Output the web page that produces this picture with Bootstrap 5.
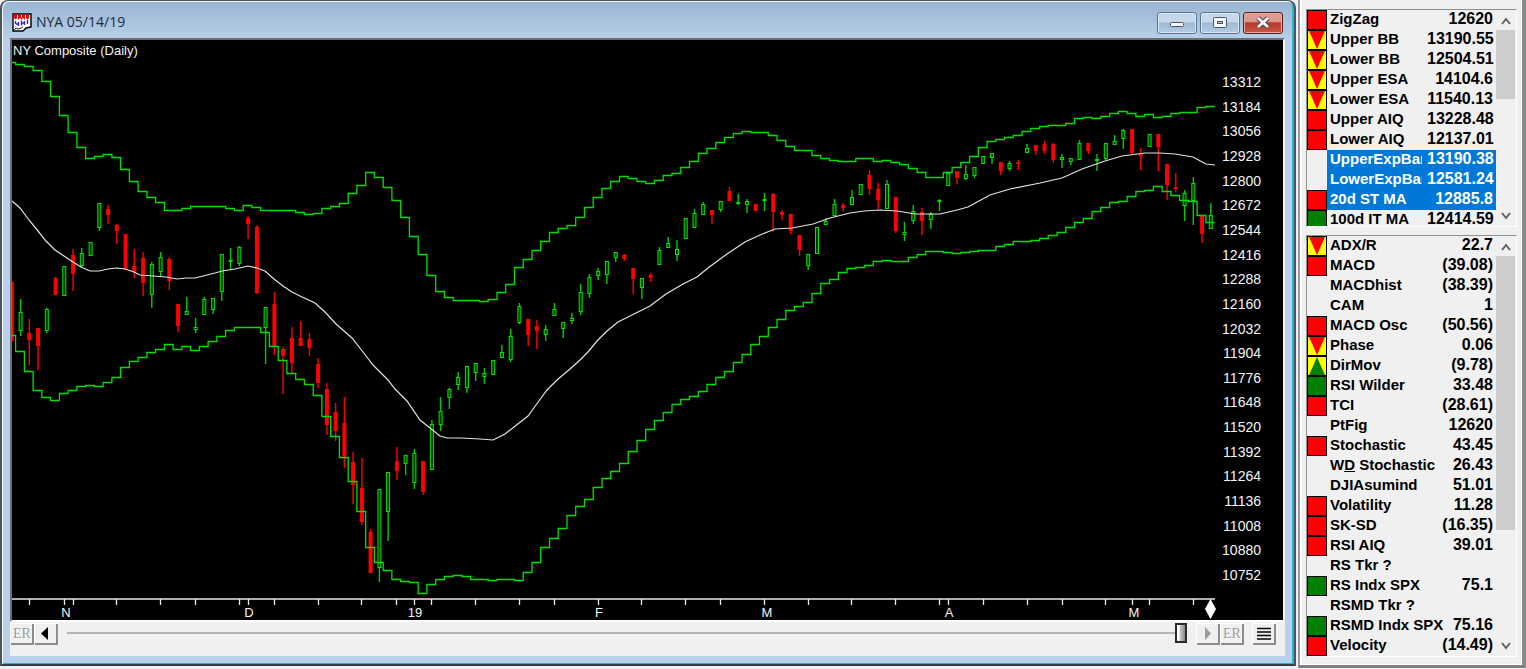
<!DOCTYPE html>
<html lang="en">
<head>
<meta charset="utf-8">
<meta name="viewport" content="width=device-width, initial-scale=1">
<title>NYA 05/14/19</title>
<link href="https://cdn.jsdelivr.net/npm/bootstrap@5.3.0/dist/css/bootstrap.min.css" rel="stylesheet">
<style>
  body { background: #f0f0f0; font-family: "Liberation Sans", Arial, sans-serif; color: #000; }
  button { font-family: inherit; }

  .mdi-window {
    min-width: 0;
    background: linear-gradient(#99b4d1, #b9d1ea 40px);
    border: 2px solid #4a5560;
    border-top-width: 1px;
    border-bottom-color: #353c44;
    border-radius: 8px 8px 0 0;
    box-shadow: inset 1px 1px 0 #f4f8fc, inset -1px -1px 0 #25b3cf, inset -2px -1px 0 #25b3cf;
    padding: 0 9px 8px 8px;
  }
  .title-bar { height: 37px; padding: 7px 2px 0 2px; }
  .title-text { font: 14px/20px "Open Sans", sans-serif; color: #1e2a3a; }
  .caption-btn {
    display: flex; align-items: center; justify-content: center;
    width: 40px; height: 22px; padding: 0;
    border: 1px solid #5d7590; border-radius: 3px;
    background: linear-gradient(#c6d8ea 0 45%, #9fb9d4 50%, #b4cce4);
    box-shadow: inset 0 0 0 1px #dbe8f4;
  }
  .caption-close {
    border-color: #5b1f22;
    background: linear-gradient(#dd9a90 0 42%, #b5382a 50%, #c75a48);
    box-shadow: inset 0 0 0 1px #e5aaa2;
  }
  .chart-frame { border: 2px solid #6f6f6f; border-right-color: #f4f4f4; border-bottom-color: #fff; background: #000; }
  .chart-frame svg { display: block; width: 100%; height: auto; }
  .chart-text { font: 13px "Liberation Sans", Arial, sans-serif; fill: #f4f4f4; }
  .price-label { font-size: 14px; }
  .up-body { fill: #003c00; stroke: #00e400; stroke-width: 1; }
  .up-wick { fill: #00cc00; }
  .down { fill: #ff0000; }
  .band { fill: none; stroke: #00e000; stroke-width: 1.3; }
  .average { fill: none; stroke: #e2e2e2; stroke-width: 1.2; }

  .tool-bar { background: #f0f0f0; height: 34px; padding: 1px 9px 10px 0; }
  .tool-btn {
    width: 24px; height: 22px; padding: 0; border: 0; border-radius: 0; background: #f0f0f0;
    box-shadow: inset 1px 1px 0 #fff, inset -2px -2px 0 #8c8c8c;
    font: 14px/20px "Liberation Serif", serif; color: #000;
  }
  .tool-btn svg { display: block; }
  .tool-btn:disabled { color: #9c9c9c; text-shadow: 1px 1px 0 #fff; }
  .position-slider { appearance: none; -webkit-appearance: none; background: none; height: 20px; min-width: 0; margin: 0 9px; }
  .position-slider::-webkit-slider-runnable-track { height: 20px; background: linear-gradient(#b4b4b4, #b4b4b4) center / 100% 2px no-repeat; }
  .position-slider::-webkit-slider-thumb {
    -webkit-appearance: none; width: 12px; height: 20px; border: 2px solid #2b2b2b;
    background: linear-gradient(90deg, #fff 2px, #c8c8c8 3px, #8a8a8a);
  }

  .indicator-panel {
    width: 228px; margin-left: 2px; padding: 9px 5px 8px 6px; background: #f0f0f0;
    border-left: 2px solid #9a9a9a; border-right: 4px solid #8a8a8a; border-bottom: 3px solid #7f7f7f;
    box-shadow: inset 2px 0 0 #fff, inset -1px -1px 0 #fff;
  }
  .list-box { border: 1px solid #8f8f8f; border-right-color: #fff; border-bottom-color: #fff; overflow: hidden; }
  .list-short { height: 218px; }
  .indicators { width: 189px; table-layout: fixed; border-collapse: collapse; }
  .indicators td { height: 20px; padding: 0; font-weight: bold; line-height: 18px; vertical-align: top; white-space: nowrap; }
  .indicators .col-flag { width: 20px; }
  .indicators .col-reading { width: 69px; }
  .indicators .item-name { font-size: 15px; padding-left: 3px; }
  .list-short .name-clip { width: 92px; overflow: hidden; }
  .indicators .item-reading { font-size: 16px; text-align: right; padding-right: 3px; }
  .indicators .picked .item-name, .indicators .picked .item-reading { background: #0078d7; color: #fff; }
  .flag { display: block; width: 20px; height: 20px; border: 1px solid #000; }
  .flag-red { background: #f00; }
  .flag-green { background: #008000; }
  .flag-fall, .flag-rise { background: #ff0; }
  .flag-fall::after, .flag-rise::after { content: ""; display: block; height: 18px; }
  .flag-fall::after { background: #f00; clip-path: polygon(6% 0, 94% 0, 50% 100%); }
  .flag-rise::after { background: #008000; clip-path: polygon(50% 0, 94% 100%, 6% 100%); }
  .scroll-rail { width: 20px; }
  .scroll-rail button { height: 20px; width: 20px; padding: 0; border: 0; background: none; line-height: 0; }
  .scroll-thumb { background: #cdcdcd; width: 19px; height: 69px; }
  .scroll-thumb-long { height: 274px; }
</style>
</head>
<body class="d-flex align-items-start">

<main class="mdi-window flex-grow-1">
  <header class="title-bar d-flex align-items-start">
    <svg class="mt-1" width="20" height="20" viewBox="0 0 20 20" aria-hidden="true">
      <path d="M1 2h18v13l-5 1-3 3H1z" fill="#fff" stroke="#000" stroke-width="1.4"/>
      <path d="M2 4.500h16" stroke="#e00" stroke-width="4" stroke-dasharray="3 1"/>
      <path d="M3 6.500h14" stroke="#e00" stroke-width="2" stroke-dasharray="1 2"/>
      <path d="M3.500 9v3M6.500 10v4M9.500 8.500v5M12.500 9v4M15.500 8v4M4 12h2M10 11h2" stroke="#2323e0" stroke-width="1.300" fill="none"/>
      <path d="M2 18l2-2 2 1 3-1 2-1" stroke="#222" fill="none"/>
    </svg>
    <span class="title-text ms-1 mt-1 flex-grow-1">NYA 05/14/19</span>
    <div class="d-flex mt-1" style="gap:3px">
      <button type="button" class="caption-btn" aria-label="Minimize">
        <svg width="16" height="14" viewBox="0 0 16 14"><rect x="1.500" y="6.500" width="13" height="4" rx="1" fill="#f8f8f8" stroke="#46566a"/></svg>
      </button>
      <button type="button" class="caption-btn" aria-label="Maximize">
        <svg width="16" height="14" viewBox="0 0 16 14"><rect x="1.500" y="1.500" width="13" height="10" rx="1" fill="#f8f8f8" stroke="#46566a"/><rect x="5.500" y="5.500" width="5" height="2" fill="#a8bfd8" stroke="#46566a"/></svg>
      </button>
      <button type="button" class="caption-btn caption-close" aria-label="Close">
        <svg width="16" height="14" viewBox="0 0 16 14"><path d="M3 2l10 9M13 2l-10 9" stroke="#54404a" stroke-width="5"/><path d="M3 2l10 9M13 2l-10 9" stroke="#f8f8f8" stroke-width="3"/></svg>
      </button>
    </div>
  </header>

  <section class="chart-frame">
    <svg id="chart" viewBox="12 40 1271 580" role="img" aria-label="NY Composite daily price chart"></svg>
  </section>

  <div class="tool-bar d-flex align-items-start">
    <button type="button" class="tool-btn" disabled>ER</button>
    <button type="button" class="tool-btn" aria-label="Step back">
      <svg width="24" height="22" viewBox="0 0 24 22"><path d="M14 4v13l-7-6.500z" fill="#000"/></svg>
    </button>
    <input type="range" class="position-slider flex-grow-1" min="0" max="137" value="137" aria-label="Chart date">
    <button type="button" class="tool-btn" disabled aria-label="Step forward">
      <svg width="24" height="22" viewBox="0 0 24 22"><path d="M9 4v13l6-6.500z" fill="#9c9c9c"/></svg>
    </button>
    <button type="button" class="tool-btn" disabled>ER</button>
    <button type="button" class="tool-btn ms-2" aria-label="Menu">
      <svg width="24" height="22" viewBox="0 0 24 22"><path d="M5 5.500h14M5 9h14M5 12.500h14M5 16h14" stroke="#000" stroke-width="1.500"/></svg>
    </button>
  </div>
</main>

<aside class="indicator-panel flex-shrink-0 d-flex flex-column gap-2">
  <section class="list-box list-short d-flex">
    <table class="indicators" id="overlays"></table>
    <div class="scroll-rail d-flex flex-column">
      <button type="button" aria-label="Scroll up"><svg width="20" height="20" viewBox="0 0 20 20"><path d="M6 14l4-5 4 5" fill="none" stroke="#606060" stroke-width="2"/></svg></button>
      <div class="scroll-thumb"></div>
      <button type="button" class="mt-auto" aria-label="Scroll down"><svg width="20" height="20" viewBox="0 0 20 20"><path d="M6 7l4 5 4-5" fill="none" stroke="#606060" stroke-width="2"/></svg></button>
    </div>
  </section>
  <section class="list-box d-flex">
    <table class="indicators" id="oscillators"></table>
    <div class="scroll-rail d-flex flex-column">
      <button type="button" aria-label="Scroll up"><svg width="20" height="20" viewBox="0 0 20 20"><path d="M6 14l4-5 4 5" fill="none" stroke="#606060" stroke-width="2"/></svg></button>
      <div class="scroll-thumb scroll-thumb-long"></div>
      <button type="button" class="mt-auto" aria-label="Scroll down"><svg width="20" height="20" viewBox="0 0 20 20"><path d="M6 7l4 5 4-5" fill="none" stroke="#606060" stroke-width="2"/></svg></button>
    </div>
  </section>
</aside>

<script src="https://cdn.jsdelivr.net/npm/bootstrap@5.3.0/dist/js/bootstrap.bundle.min.js"></script>
<script>
  // Indicator lists: flag, name, value, selected
  const overlays = [
    ['red', 'ZigZag', '12620'], ['fall', 'Upper BB', '13190.55'], ['fall', 'Lower BB', '12504.51'],
    ['fall', 'Upper ESA', '14104.6'], ['fall', 'Lower ESA', '11540.13'], ['red', 'Upper AIQ', '13228.48'],
    ['red', 'Lower AIQ', '12137.01'], ['', 'UpperExpBan', '13190.38', true], ['', 'LowerExpBan', '12581.24', true],
    ['red', '20d ST MA', '12885.8', true], ['green', '100d IT MA', '12414.59']
  ];
  const oscillators = [
    ['fall', 'ADX/R', '22.7'], ['red', 'MACD', '(39.08)'], ['', 'MACDhist', '(38.39)'], ['', 'CAM', '1'],
    ['red', 'MACD Osc', '(50.56)'], ['fall', 'Phase', '0.06'], ['rise', 'DirMov', '(9.78)'],
    ['green', 'RSI Wilder', '33.48'], ['red', 'TCI', '(28.61)'], ['', 'PtFig', '12620'],
    ['red', 'Stochastic', '43.45'], ['', 'W<u>D</u> Stochastic', '26.43'], ['', 'DJIAsumind', '51.01'],
    ['red', 'Volatility', '11.28'], ['red', 'SK-SD', '(16.35)'], ['red', 'RSI AIQ', '39.01'],
    ['', 'RS Tkr ?', ''], ['green', 'RS Indx SPX', '75.1'], ['', 'RSMD Tkr ?', ''],
    ['green', 'RSMD Indx SPX', '75.16'], ['red', 'Velocity', '(14.49)']
  ];
  function fillTable(id, rows) {
    document.getElementById(id).innerHTML =
      '<colgroup><col class="col-flag"><col><col class="col-reading"></colgroup><tbody>' +
      rows.map(([flag, name, value, picked]) =>
        `<tr${picked ? ' class="picked"' : ''}><td>${flag ? `<span class="flag flag-${flag}"></span>` : ''}</td>` +
        `<td class="item-name"><div class="name-clip">${name}</div></td><td class="item-reading">${value}</td></tr>`).join('') + '</tbody>';
  }
  fillTable('overlays', overlays);
  fillTable('oscillators', oscillators);

  // Daily bars: direction, high, body top, body bottom, low
  const bars = `r 281 282 340 341|g 299 312 330 335|r 319 333 339 364|r 328 328 345 369|g 308 309 330 332|r 277 278 294 294|g 266 266 295 295|r 249 255 273 290|g 248 253 265 266|g 242 242 255 255|g 203 203 227 230|r 205 209 214 223|r 224 225 230 243|r 234 234 268 269|r 249 266 271 277|r 252 258 282 295|g 262 264 294 307|g 252 257 271 276|r 257 259 280 289|r 304 304 325 331|g 297 311 314 314|g 318 327 329 332|g 297 299 314 314|g 298 298 309 313|g 254 254 291 300|g 248 260 261 269|g 246 247 263 265|r 216 218 223 238|r 225 227 292 293|g 307 307 327 363|r 292 304 345 354|r 347 349 355 393|r 327 338 362 372|r 321 338 345 345|r 333 339 347 355|r 358 364 382 387|r 383 389 424 434|r 403 412 430 440|r 397 423 455 467|r 452 462 484 503|r 458 488 521 524|r 529 532 572 572|g 489 489 567 581|g 472 472 511 540|r 447 461 470 479|g 455 455 463 474|g 449 453 482 488|r 461 461 491 494|g 420 424 469 469|g 397 411 424 430|g 388 389 397 408|g 372 377 384 389|g 366 366 387 392|g 363 363 372 380|g 368 373 376 383|g 360 360 374 374|g 345 352 357 357|g 329 336 359 361|g 303 306 322 323|r 319 319 334 345|r 320 326 330 348|g 325 329 334 340|g 303 309 315 315|g 322 322 328 337|g 313 318 320 323|g 284 292 311 314|g 274 277 293 297|g 268 271 275 279|g 261 261 274 283|g 252 252 257 261|r 254 255 258 260|r 268 268 278 293|g 278 278 287 298|r 273 275 277 281|g 247 250 264 264|g 237 243 247 247|g 240 249 254 260|g 218 218 238 238|g 209 213 227 227|g 202 204 214 214|r 210 210 214 223|g 201 201 209 211|r 187 191 200 200|g 194 202 203 204|g 199 201 204 212|r 204 204 210 210|g 193 199 200 210|r 193 194 211 231|r 210 212 214 219|r 214 214 230 233|r 235 235 249 255|g 254 254 265 269|g 227 227 253 253|g 218 221 224 224|g 199 204 215 215|r 203 205 207 211|g 190 197 204 204|g 184 184 194 194|r 170 175 188 194|r 183 189 199 208|g 180 184 208 208|r 197 197 230 232|g 222 232 234 240|g 205 211 220 223|r 208 212 220 234|g 212 214 219 228|g 199 200 201 210|g 173 173 185 185|r 171 171 177 183|g 165 174 178 179|g 167 167 175 177|g 156 156 163 163|g 153 153 157 163|r 162 162 170 174|g 161 163 168 170|r 160 162 163 169|g 144 148 152 152|r 145 145 150 154|r 141 144 150 153|r 143 144 159 162|g 154 157 159 167|g 158 158 161 164|g 140 143 159 159|r 143 143 150 153|g 154 159 160 170|g 143 143 158 159|g 135 141 144 144|g 129 130 138 148|r 129 129 152 153|r 148 153 155 169|g 134 134 146 146|r 134 134 146 170|r 164 164 184 199|r 173 187 188 191|g 190 193 205 220|g 177 183 200 224|r 215 215 233 242|g 203 215 228 228`
    .split('|').map(b => b.split(' '));

  const upper = [62,64,66,70,81,96,115,132,147,158,156,154,157,169,181,191,197,202,210,210,208,206,206,206,206,208,210,205,207,210,210,210,210,212,214,213,208,206,203,193,185,172,177,187,200,217,236,254,275,291,297,300,300,300,301,299,292,284,267,259,250,241,232,228,225,217,207,197,188,181,176,178,181,183,180,175,173,167,161,153,148,142,137,133,131,132,132,135,140,146,150,150,155,158,160,161,161,158,158,161,160,162,164,168,172,177,177,172,167,162,156,147,141,139,137,135,131,128,126,125,125,123,118,117,118,116,113,111,113,116,114,117,116,113,112,112,107,106];
  const lower = [335,351,371,390,397,400,393,390,386,385,386,382,377,367,361,357,352,349,344,349,346,350,346,341,336,330,327,327,327,332,346,360,373,379,384,395,416,436,457,481,511,547,562,570,579,581,582,593,584,579,576,575,576,579,579,580,579,579,580,572,562,547,538,528,515,506,499,487,478,471,463,451,440,429,420,412,404,399,396,391,384,377,371,362,354,344,336,327,319,310,306,302,293,283,279,272,268,267,265,261,260,261,261,257,254,251,251,252,253,252,251,250,250,246,244,241,241,240,238,235,232,227,222,218,211,207,202,201,196,191,190,186,191,195,200,201,215,222];
  const average = '12,201 20,208 29,220 38,231 46,241 55,250 64,256 73,262 81,267 90,271 99,271 108,269 117,268 125,269 134,272 140,275 166,277 177,279 186,278 195,278 203,276 215,273 222,271 235,269 248,266 257,268 265,271 274,279 283,286 292,292 300,296 315,303 325,312 336,324 352,338 363,352 373,365 388,380 395,389 407,401 420,420 430,428 440,436 447,438 461,438 480,439 493,440 505,434 514,427 528,416 536,405 547,390 557,380 570,369 580,360 588,352 597,341 607,331 618,322 628,317 650,306 666,294 683,284 697,277 708,268 727,254 745,242 760,235 775,229 792,228 813,224 830,218 850,213 864,211 880,210 897,211 915,214 940,214 957,210 968,207 990,195 1010,189 1040,183 1062,178 1082,169 1105,161 1122,156 1145,153 1160,153 1175,154 1193,157 1206,164 1215,165';

  const step = 8.752, left = 11.3;
  const at = i => left + step * i;
  const fix = n => n.toFixed(1);
  const stairs = levels => 'M12 ' + (levels[0] + .5) +
    levels.map((y, i) => `V${y + .5}H${fix(at(i) + 4.3)}`).join('');

  let out = '';
  bars.forEach(([dir, high, top, bottom, low], i) => {
    const x = at(i) + .5, h = +high, t = +top, b = +bottom, l = +low;
    if (dir === 'r') {
      out += `<rect class="down" x="${fix(x - .7)}" y="${h}" width="1.4" height="${l - h + 1}"/>` +
             `<rect class="down" x="${fix(x - 2)}" y="${t}" width="4" height="${b - t + 1}"/>`;
    } else {
      out += `<rect class="up-wick" x="${fix(x - .7)}" y="${h}" width="1.4" height="${l - h + 1}"/>` +
             `<rect class="up-body" x="${fix(x - 1.5)}" y="${t + .5}" width="3" height="${b - t}"/>`;
    }
  });
  out += `<path class="band" d="${stairs(upper)}"/><path class="band" d="${stairs(lower)}"/>`;
  out += `<polyline class="average" points="${average}"/>`;

  // Time axis: a tick on each week's last session and on each month's first
  const ticks = [2,6,7,12,17,21,26,27,30,35,40,44,46,48,53,58,62,67,72,77,81,86,91,96,101,106,107,111,116,120,125,128,130,135];
  out += '<path d="M12 599H1215' + ticks.map(i => `M${Math.round(at(i)) + .5} 599v6`).join('') + '" stroke="#e8e8e8" stroke-width="1.3"/>';
  out += '<path d="M1210.500 599l5.500 10-5.500 10-5.500-10z" fill="#fff"/>';
  [['N', 66], ['D', 249], ['19', 415], ['F', 599], ['M', 767], ['A', 949], ['M', 1134]].forEach(([label, x]) => {
    out += `<text class="chart-text" x="${x}" y="617" text-anchor="middle">${label}</text>`;
  });
  for (let i = 0; i <= 20; i++) {
    out += `<text class="chart-text price-label" x="1261" y="${Math.round(87 + i * 24.65)}" text-anchor="end">${13312 - 128 * i}</text>`;
  }
  out += '<text class="chart-text" x="13" y="55">NY Composite (Daily)</text>';
  document.getElementById('chart').innerHTML = out;
</script>
</body>
</html>
